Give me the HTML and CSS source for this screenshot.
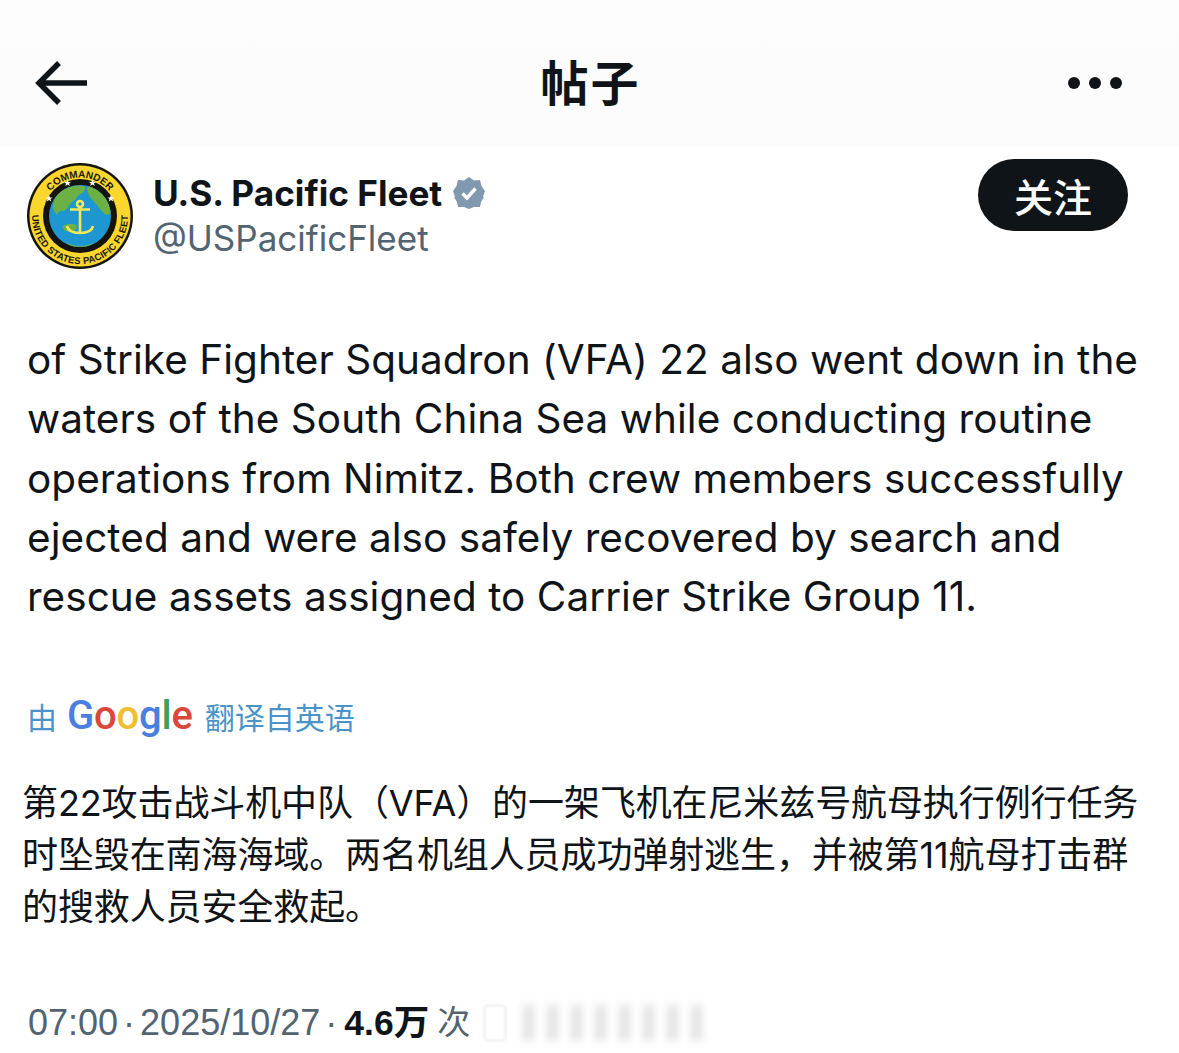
FILE: index.html
```html
<!DOCTYPE html>
<html lang="zh">
<head>
<meta charset="utf-8">
<title>帖子</title>
<link rel="stylesheet" href="styles.css">
</head>
<body>
<div class="page">
  <header class="topbar">
    <svg class="back" viewBox="0 0 54 46" width="54" height="46"><path d="M52 23H4M24 3 4 23l20 20" fill="none" stroke="#0f1419" stroke-width="5.500"/></svg>
    <div class="title">帖子</div>
    <div class="more"><i></i><i></i><i></i></div>
  </header>
  <section class="author">
    <svg class="avatar" viewBox="0 0 106 106" width="106" height="106">
      <defs>
        <path id="arcTop" d="M14.500 53a38.500 38.500 0 0 1 77 0"/>
        <path id="arcBottom" d="M5 53a48 48 0 0 0 96 0"/>
        <clipPath id="globeClip"><circle cx="53" cy="53" r="31"/></clipPath>
      </defs>
      <circle cx="53" cy="53" r="53" fill="#17150f"/>
      <circle cx="53" cy="53" r="50.500" fill="#fbd72e"/>
      <circle cx="53" cy="53" r="37" fill="#15130e"/>
      <circle cx="53" cy="53" r="31" fill="#1d96d2"/>
      <g clip-path="url(#globeClip)" fill="#6cb144">
        <path d="M30 32c6-7 18-11 27-9 3 2 0 6-3 8-5 1-4 6-9 8-4 3-4 8-9 9-3-1-5 1-6 4-2-3-4-5-4-8 0-5 2-9 4-12z"/>
        <path d="M62 23c11 2 21 13 22 27-3 3-7 2-9-2-3-2-4-6-7-8-3-4-8-9-8-14 0-2 1-3 2-3z"/>
        <path d="M36 63c5-3 11-3 14 0 1 3-4 6-8 6-4-1-7-3-6-6z"/>
        <path d="M40 80c8 4 18 4 26 0l-4 6H44z"/>
      </g>
      <g fill="none" stroke="#f4e858" stroke-width="2.600">
        <circle cx="53" cy="41" r="3"/>
        <path d="M53 44v25M43 46.500h20M40 63c1 5 7 7 13 7s12-2 13-7"/>
      </g>
      <g fill="#fff">
        <path d="M40.500 16.500l1 2.400h2.600l-2.100 1.600.8 2.500-2.300-1.500-2.300 1.500.8-2.500-2.100-1.600h2.600z"/>
        <path d="M65.500 16.500l1 2.400h2.600l-2.100 1.600.8 2.500-2.300-1.500-2.300 1.500.8-2.500-2.100-1.600h2.600z"/>
        <path d="M22 32l1 2.400h2.600l-2.100 1.600.8 2.500-2.300-1.500-2.300 1.500.8-2.500-2.100-1.600H21z"/>
        <path d="M84 32l1 2.400h2.600l-2.100 1.600.8 2.500-2.300-1.500-2.300 1.500.8-2.500-2.100-1.600H83z"/>
      </g>
      <text class="ring"><textPath href="#arcTop" startOffset="50%" text-anchor="middle">COMMANDER</textPath></text>
      <text class="ring small"><textPath href="#arcBottom" startOffset="50%" text-anchor="middle">UNITED STATES PACIFIC FLEET</textPath></text>
    </svg>
    <div class="names">
      <div class="name-row">
        <span class="name">U.S. Pacific Fleet</span>
        <svg class="badge" viewBox="0 0 32 32" width="32" height="32"><path d="M16 0l5 3.500 6-.5 1.500 6L32 14l-2 6 1 0-3 5-1 5-6 0-5 2-5-2-6 0-1-5-3-5 1 0-2-6 3.500-5L5 3l6 .5z" fill="#8199ae"/><path d="M9.500 16.500l4.500 4.500 8.500-9.500" fill="none" stroke="#fff" stroke-width="3.400"/></svg>
      </div>
      <div class="handle">@USPacificFleet</div>
    </div>
    <button class="follow">关注</button>
  </section>
  <p class="tweet">of Strike Fighter Squadron (VFA) 22 also went down in the<br>waters of the South China Sea while conducting routine<br>operations from Nimitz. Both crew members successfully<br>ejected and were also safely recovered by search and<br>rescue assets assigned to Carrier Strike Group 11.</p>
  <div class="translated">
    <span>由</span>
    <span class="google"><b class="blue">G</b><b class="red">o</b><b class="yellow">o</b><b class="blue">g</b><b class="green">l</b><b class="red">e</b></span>
    <span>翻译自英语</span>
  </div>
  <p class="translation">第22攻击战斗机中队（VFA）的一架飞机在尼米兹号航母执行例行任务<br>时坠毁在南海海域。两名机组人员成功弹射逃生，并被第11航母打击群<br>的搜救人员安全救起。</p>
  <footer class="meta">
    <span>07:00</span><span class="dot">·</span><span>2025/10/27</span><span class="dot">·</span><strong>4.6万</strong><span class="ci">次</span>
    <div class="smudge"><i class="white"></i><i></i><i></i><i></i><i></i><i></i><i></i><i></i><i></i></div>
  </footer>
</div>
</body>
</html>
```
FILE: styles.css
```css
* { box-sizing: border-box; }
html, body { margin: 0; padding: 0; background: #fff; }
body { font-family: "Inter", "Noto Sans CJK SC", sans-serif; color: #0f1419; }
.page { width: 1179px; height: 1053px; overflow: hidden; display: flex; flex-direction: column; }
.topbar {
  height: 147px; flex: none; display: flex; align-items: center; justify-content: space-between;
  padding: 18px 57px 0 35px; position: relative;
  background: linear-gradient(#fdfdfd, #fcfcfc);
}
.back { display: block; }
.title {
  position: absolute; left: 2px; right: 0; top: 48px; text-align: center;
  font: 700 48px/64px "Noto Sans CJK SC", sans-serif; letter-spacing: 2px;
}
.more { display: flex; gap: 9px; }
.more i { width: 12px; height: 12px; border-radius: 50%; background: #0f1419; display: block; }
.author { display: flex; align-items: flex-start; padding: 16px 51px 0 27px; flex: none; height: 155px; }
.avatar { flex: none; display: block; }
.ring { font: 700 10px "Liberation Sans", sans-serif; fill: #1a170f; }
.ring.small { font-size: 9.500px; letter-spacing: .2px; }
.names { margin-left: 20px; padding-top: 6px; flex: 1; }
.name-row { display: flex; align-items: center; gap: 11px; height: 48px; }
.name { font: 700 35.200px/48px "Inter", sans-serif; }
.badge { display: block; }
.handle { font: 400 35px/42px "Inter", sans-serif; color: #536471; }
.follow {
  width: 150px; height: 72px; border: 0; border-radius: 36px; background: #0f1419; color: #fff;
  font: 500 39px/72px "Noto Sans CJK SC", sans-serif; padding: 0; margin-top: -4px;
}
.tweet { margin: 28px 0 0 27px; font: 400 40.500px/59.300px "Inter", sans-serif; white-space: nowrap; flex: none; letter-spacing: .04px; }
.translated {
  display: flex; align-items: center; gap: 10px; margin: 67px 0 0 27px; height: 46px; flex: none;
  font: 400 30px/46px "Noto Sans CJK SC", sans-serif; color: #4a94c9;
}
.google { font: 500 40px/46px "Roboto", sans-serif; letter-spacing: -.2px; margin-right: 2px; }
.google b { font-weight: 500; }
.blue { color: #4a7fe0; }
.red { color: #d9483b; }
.yellow { color: #f0bf30; }
.green { color: #3f9f5a; }
.translation {
  margin: 38px 0 0 22px; font: 400 36px/52px "Inter", "Noto Sans CJK SC", sans-serif; white-space: nowrap; flex: none; letter-spacing: -.1px;
}
.meta {
  display: flex; align-items: center; margin: 68px 0 0 28px; height: 44px; flex: none;
  font: 400 36px/44px "Liberation Sans", "Noto Sans CJK SC", sans-serif; color: #536471; white-space: pre;
}
.dot { margin: 0 5px; }
.meta strong { font: 700 35.500px/44px "Liberation Sans", "Noto Sans CJK SC", sans-serif; color: #0f1419; margin-left: 2px; }
.ci { margin-left: 8px; font-size: 33px; }
.smudge { display: flex; gap: 13px; margin-left: 14px; height: 36px; align-items: stretch; }
.smudge i { display: block; width: 11px; background: #e2e2e2; filter: blur(4px); }
.smudge .white { width: 22px; background: #fff; border: 1px solid #ddd; border-radius: 4px; filter: blur(1px); margin-right: 4px; }
```
